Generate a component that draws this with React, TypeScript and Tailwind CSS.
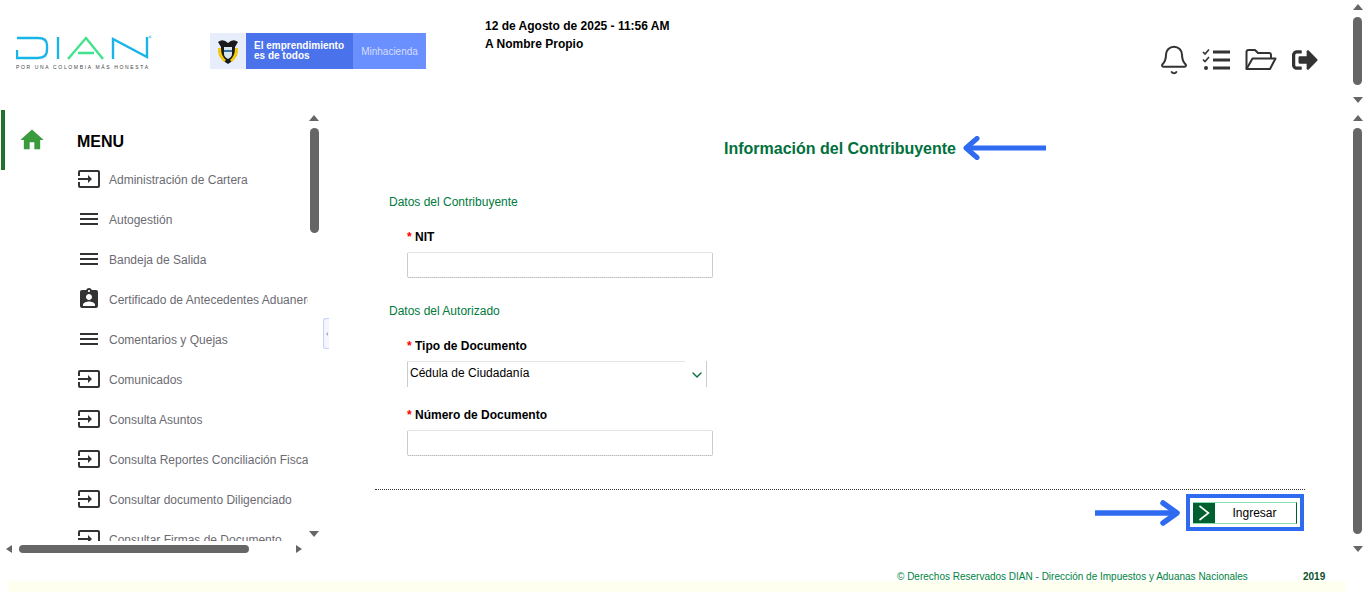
import { Bell, ChevronDown } from "lucide-react";
import { FaSignOutAlt } from "react-icons/fa";
import { MdAssignmentInd, MdHome, MdInput, MdMenu } from "react-icons/md";

const menuItems = [
  { icon: "input", label: "Administración de Cartera" },
  { icon: "menu", label: "Autogestión" },
  { icon: "menu", label: "Bandeja de Salida" },
  { icon: "badge", label: "Certificado de Antecedentes Aduaneros" },
  { icon: "menu", label: "Comentarios y Quejas" },
  { icon: "input", label: "Comunicados" },
  { icon: "input", label: "Consulta Asuntos" },
  { icon: "input", label: "Consulta Reportes Conciliación Fiscal" },
  { icon: "input", label: "Consultar documento Diligenciado" },
  { icon: "input", label: "Consultar Firmas de Documento" },
];

function ArrowUp() {
  return <div className="h-0 w-0 border-x-[5px] border-b-[6px] border-x-transparent border-b-[#666]" />;
}

function ArrowDown() {
  return <div className="h-0 w-0 border-x-[5px] border-t-[6px] border-x-transparent border-t-[#666]" />;
}

function DianLogo() {
  return (
    <div className="flex w-[136px] flex-col">
      <svg width="137" height="26" viewBox="0 0 137 26" fill="none" className="blur-[0.3px]">
        <path d="M1 3 H22 Q31 3 31 10 V15 Q31 23 22 23 H1 V15" stroke="#19b5e8" strokeWidth="2.4" />
        <path d="M42 2 V24" stroke="#19b5e8" strokeWidth="2.4" />
        <path d="M52 24 L70 3 L87 24 M62 18 H78" stroke="#3fe38a" strokeWidth="2.4" />
        <path d="M97 24 V4 L131 22 V2" stroke="#19b5e8" strokeWidth="2.4" />
        <circle cx="134" cy="2" r="1.5" fill="#8fd8ee" />
      </svg>
      <span className="mt-[3px] whitespace-nowrap text-[5px] leading-[7px] tracking-[1.65px] text-[#444]">
        POR UNA COLOMBIA MÁS HONESTA
      </span>
    </div>
  );
}

function GovBadge() {
  return (
    <div className="flex h-[36px] w-[216px] text-white">
      <div className="flex w-[36px] items-center justify-start bg-[#e8edfb] pl-[7px]">
        <svg width="22" height="27" viewBox="0 0 22 27">
          <path d="M1 4 Q6 0 11 5 Q16 0 21 4 L18 9 H4 Z" fill="#1a1a1a" />
          <path d="M4 8 H18 V16 Q18 22 11 26 Q4 22 4 16 Z" fill="#1a1a1a" />
          <path d="M1 10 Q0 18 7 24 L9 22 Q4 18 4 10 Z M21 10 Q22 18 15 24 L13 22 Q18 18 18 10 Z" fill="#f2c811" />
          <path d="M7 9 H15 V16 Q15 19 11 21 Q7 19 7 16 Z" fill="#d8e6ef" />
          <path d="M7 12 H15 V14 H7 Z" fill="#3a6ea5" />
        </svg>
      </div>
      <div className="flex w-[107px] flex-col justify-center bg-[#4a72ea] pl-[8px] text-[10px] leading-[10px] font-bold">
        <span>El emprendimiento</span>
        <span>es de todos</span>
      </div>
      <div className="flex flex-1 items-center justify-center bg-[#6a8fff] text-[10px] text-[#d5defc]">Minhacienda</div>
    </div>
  );
}

function TasksIcon() {
  return (
    <svg width="28" height="24" viewBox="0 0 28 24" fill="none" stroke="#333">
      <path d="M1 4 L3 6 L7 1.5" strokeWidth="1.6" />
      <path d="M1 11.5 L3 13.5 L7 9" strokeWidth="1.6" />
      <circle cx="4" cy="20" r="2" fill="#333" stroke="none" />
      <path d="M11 4 H28 M11 12 H28 M11 20 H28" strokeWidth="3" />
    </svg>
  );
}

function FolderIcon() {
  return (
    <svg width="32" height="22" viewBox="0 0 32 22" fill="none" stroke="#333" strokeWidth="2" strokeLinejoin="round">
      <path d="M1.5 20 V3 Q1.5 1 3.5 1 H10 L13 4 H24 Q26 4 26 6 V9" />
      <path d="M1.5 20 L7.5 9.5 H30.5 L25 20 Z" />
    </svg>
  );
}

function MenuIcon({ name }: { name: string }) {
  if (name === "input") return <MdInput size={24} color="#333" />;
  if (name === "badge") return <MdAssignmentInd size={24} color="#333" />;
  return <MdMenu size={24} color="#333" />;
}

function Header() {
  return (
    <header className="flex h-[110px]">
      <div className="flex flex-1">
        <div className="ml-[16px] mt-[35px]">
          <DianLogo />
        </div>
        <div className="ml-[58px] mt-[33px]">
          <GovBadge />
        </div>
        <div className="ml-[59px] mt-[17px] text-[12px] leading-[18px] font-bold text-black">
          <p>12 de Agosto de 2025 - 11:56 AM</p>
          <p>A Nombre Propio</p>
        </div>
        <div className="ml-auto mr-[34px] mt-[46px] flex h-[28px] items-center text-[#333]">
          <Bell size={32} strokeWidth={1.5} />
          <div className="ml-[12px]">
            <TasksIcon />
          </div>
          <div className="ml-[15px]">
            <FolderIcon />
          </div>
          <div className="ml-[15px]">
            <FaSignOutAlt size={26} />
          </div>
        </div>
      </div>
      <div className="flex w-[14px] flex-col items-start pl-[1px] pt-[4px]">
        <ArrowUp />
        <div className="mt-[7px] h-[68px] w-[9px] rounded-full bg-[#666]" />
        <div className="mt-[12px]">
          <ArrowDown />
        </div>
      </div>
    </header>
  );
}

function Sidebar() {
  return (
    <aside className="relative flex h-[445px] w-[330px] flex-col">
      <div className="flex h-[431px]">
        <div className="flex w-[77px]">
          <div className="ml-[1px] h-[60px] w-[4px] bg-[#22702c]" />
          <div className="ml-[13px] mt-[16px] text-[#3a9a3c]">
            <MdHome size={28} />
          </div>
        </div>
        <nav className="w-[231px] overflow-hidden">
          <h2 className="mt-[23px] mb-[8px] text-[16px] leading-[18px] font-bold text-black">MENU</h2>
          <ul>
            {menuItems.map((item) => (
              <li key={item.label} className="flex h-[40px] items-center gap-[8px]">
                <span className="shrink-0">
                  <MenuIcon name={item.icon} />
                </span>
                <span className="mt-[2px] whitespace-nowrap text-[12px] text-[#6b6b72]">{item.label}</span>
              </li>
            ))}
          </ul>
        </nav>
        <div className="ml-[1px] flex w-[10px] flex-col items-center pt-[5px]">
          <ArrowUp />
          <div className="mt-[7px] h-[105px] w-[9px] rounded-full bg-[#666]" />
          <div className="mt-auto mb-[4px]">
            <ArrowDown />
          </div>
        </div>
      </div>
      <div className="ml-[6px] mt-px flex h-[14px] items-center">
        <div className="h-0 w-0 border-y-[4px] border-r-[6px] border-y-transparent border-r-[#666]" />
        <div className="ml-[7px] h-[8px] w-[230px] rounded-full bg-[#666]" />
        <div className="ml-[47px] h-0 w-0 border-y-[4px] border-l-[6px] border-y-transparent border-l-[#666]" />
      </div>
      <div className="absolute left-[323px] top-[208px] flex h-[31px] w-[6px] items-center justify-center rounded-l-[3px] border border-r-0 border-[#c5d4fb] bg-[#f3f6ff]">
        <div className="h-0 w-0 border-y-[2px] border-r-[2px] border-y-transparent border-r-[#aab]" />
      </div>
    </aside>
  );
}

function Field({ label }: { label: string }) {
  return (
    <>
      <label className="block h-[16px] pl-[18px] text-[12px] leading-[18px] font-bold text-black">
        <span className="text-[#f00]">*</span> {label}
      </label>
      <div className="ml-[18px] mt-[8px] h-[26px] w-[306px] rounded-[2px] border-x border-t border-b border-x-[#ccc] border-t-[#e4e4e4] border-b-[#999] [border-bottom-style:dotted]" />
    </>
  );
}

function MainForm() {
  return (
    <main className="relative flex-1 pl-[45px] pr-[47px]">
      <h1 className="mt-[29px] h-[18px] text-center text-[16px] leading-[20px] font-bold text-[#00703c]">
        Información del Contribuyente
      </h1>
      <svg width="86" height="24" viewBox="0 0 86 24" fill="none" stroke="#2f6bf0" strokeLinecap="round" strokeLinejoin="round" className="absolute left-[630px] top-[26px]">
        <path d="M86 12 H7" strokeWidth="5" strokeLinecap="butt" />
        <path d="M17 2.5 L6 12 L17 21.5" strokeWidth="5" />
      </svg>

      <div className="pl-[14px]">
        <h3 className="mt-[36px] mb-[19px] h-[16px] text-[12px] leading-[18px] text-[#007a3d]">Datos del Contribuyente</h3>
        <Field label="NIT" />
        <h3 className="mt-[24px] mb-[19px] h-[16px] text-[12px] leading-[18px] text-[#007a3d]">Datos del Autorizado</h3>
        <label className="block h-[16px] pl-[18px] text-[12px] leading-[18px] font-bold text-black">
          <span className="text-[#f00]">*</span> Tipo de Documento
        </label>
        <div className="ml-[18px] mt-[8px] flex h-[26px] w-[300px] items-start border-x border-x-[#ccc] pl-[2px] pt-[3px] text-[12px] leading-[18px] text-black">
          <div className="absolute left-[77px] h-px w-[278px] -translate-y-[3px] bg-[#e4e4e4]" />
          Cédula de Ciudadanía
          <ChevronDown size={16} strokeWidth={2} className="ml-auto mr-[1px] mt-[3px] text-[#00703c]" />
        </div>
        <div className="h-[19px]" />
        <Field label="Número de Documento" />
      </div>

      <div className="mt-[33px] border-t border-dotted border-[#333]" />

      <div className="mt-[4px] flex items-center justify-end pr-px">
        <svg width="86" height="26" viewBox="0 0 86 26" fill="none" stroke="#2f6bf0" strokeLinejoin="round" strokeLinecap="round" className="mr-[6px]">
          <path d="M1 13 H82" strokeWidth="5.5" strokeLinecap="butt" />
          <path d="M69 3 L83 13 L69 23" strokeWidth="5.5" />
        </svg>
        <div className="flex h-[37px] w-[118px] items-center justify-center border-4 border-[#2f6bf0]">
          <button className="flex h-[22px] w-[104px] items-stretch border-y border-r border-y-[#86dcae] border-r-[#00602f] text-[12px] text-black">
            <span className="flex w-[22px] items-center justify-center bg-[#00602f]">
              <svg width="12" height="16" viewBox="0 0 12 16" fill="none" stroke="#fff" strokeWidth="1.6">
                <path d="M1.5 1 L10.5 8 L1.5 15" />
              </svg>
            </span>
            <span className="flex-1 pr-[2px] text-center leading-[20px]">Ingresar</span>
          </button>
        </div>
      </div>
    </main>
  );
}

export default function App() {
  return (
    <div className="h-[601px] w-[1366px] overflow-hidden bg-white font-['Liberation_Sans',Arial,sans-serif]">
      <Header />
      <div className="flex h-[445px]">
        <Sidebar />
        <MainForm />
        <div className="flex w-[14px] flex-col items-start pl-[1px] pt-[5px]">
          <ArrowUp />
          <div className="mt-[7px] h-[406px] w-[9px] rounded-full bg-[#666]" />
          <div className="mt-[12px]">
            <ArrowDown />
          </div>
        </div>
      </div>
      <footer className="pt-[13px]">
        <div className="flex h-[16px] pl-[897px] text-[10px] leading-[18px]">
          <span className="w-[406px] text-[#00843f]">© Derechos Reservados DIAN - Dirección de Impuestos y Aduanas Nacionales</span>
          <span className="font-bold text-[#0b4f2a]">2019</span>
        </div>
        <div className="ml-[8px] -mt-[3px] h-[11px] w-[1338px] bg-[#fffff0]" />
      </footer>
    </div>
  );
}
